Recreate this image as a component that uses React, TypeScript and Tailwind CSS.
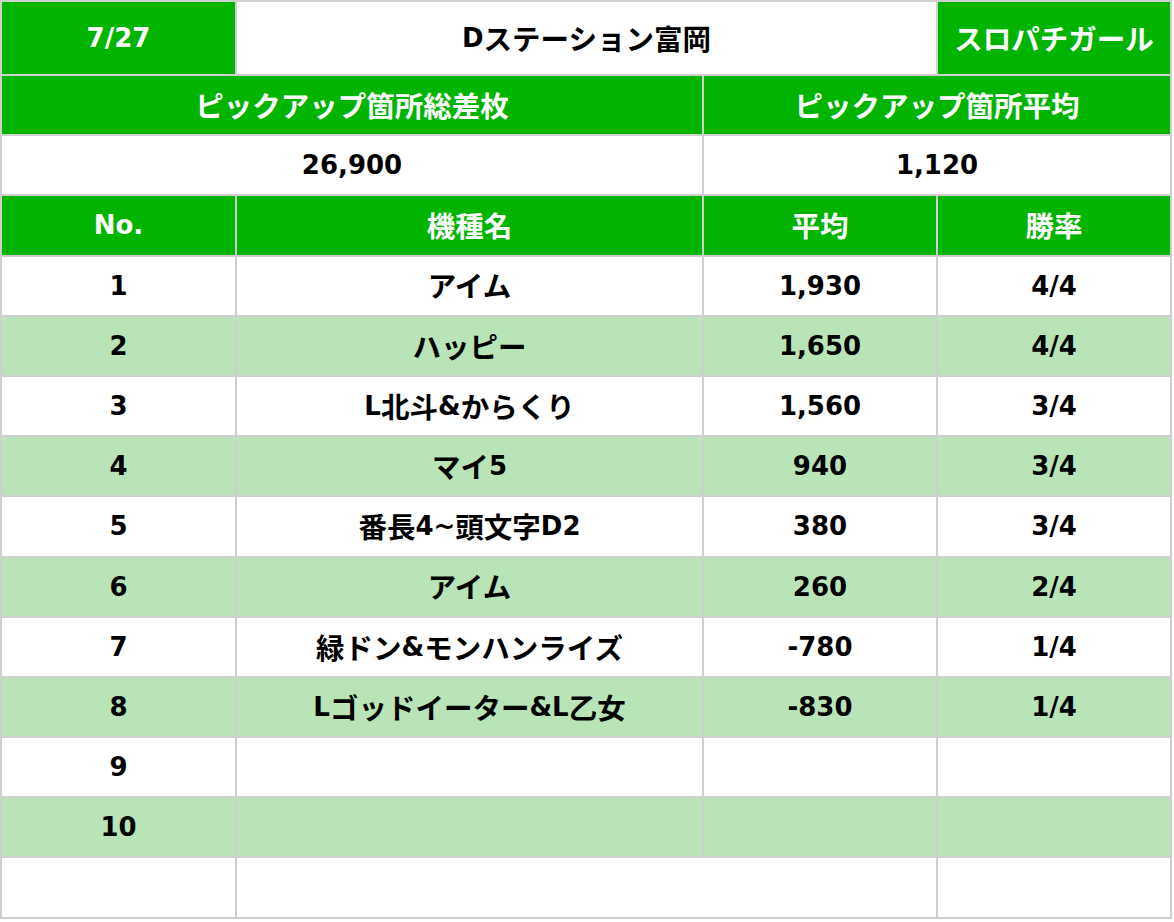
import React from "react";

const CJK = /[\u3000-\u9fff\uff00-\uffef]/;

// latin glyphs in DejaVu, japanese runs a bit bigger like the sheet's font
function Txt({ s }: { s: string }) {
  const parts: { t: string; j: boolean }[] = [];
  for (const ch of s) {
    const j = CJK.test(ch);
    const last = parts[parts.length - 1];
    if (last && last.j === j) last.t += ch;
    else parts.push({ t: ch, j });
  }
  return (
    <>
      {parts.map((p, i) =>
        p.j ? (
          <span key={i} className="text-[28.5px] font-['Noto_Sans_CJK_JP',sans-serif]">
            {p.t}
          </span>
        ) : (
          <span key={i} className="text-[26px]">
            {p.t}
          </span>
        )
      )}
    </>
  );
}

type CellProps = { s?: string; span?: string; tone: "g" | "w" | "l" };

function Cell({ s = "", span = "", tone }: CellProps) {
  const bg =
    tone === "g"
      ? "bg-[#00b400] text-white"
      : tone === "l"
      ? "bg-[#b8e4b8] text-black"
      : "bg-white text-black";
  return (
    <div className={`${bg} ${span} flex items-center justify-center leading-none font-bold`}>
      <Txt s={s} />
    </div>
  );
}

const rows = [
  ["1", "アイム", "1,930", "4/4"],
  ["2", "ハッピー", "1,650", "4/4"],
  ["3", "L北斗&からくり", "1,560", "3/4"],
  ["4", "マイ5", "940", "3/4"],
  ["5", "番長4~頭文字D2", "380", "3/4"],
  ["6", "アイム", "260", "2/4"],
  ["7", "緑ドン&モンハンライズ", "-780", "1/4"],
  ["8", "Lゴッドイーター&L乙女", "-830", "1/4"],
  ["9", "", "", ""],
  ["10", "", "", ""],
];

export default function App() {
  return (
    <div className="w-[1174px] h-[922px] bg-white">
      <div className="w-[1172px] grid grid-cols-[233px_465px_232px_232px] grid-rows-[72px_repeat(14,58.2px)] gap-[2px] p-[2px] bg-[#cfcfcf] font-['DejaVu_Sans','Noto_Sans_CJK_JP',sans-serif]">
        <Cell s="7/27" tone="g" />
        <Cell s="Dステーション富岡" span="col-span-2" tone="w" />
        <Cell s="スロパチガール" tone="g" />

        <Cell s="ピックアップ箇所総差枚" span="col-span-2" tone="g" />
        <Cell s="ピックアップ箇所平均" span="col-span-2" tone="g" />

        <Cell s="26,900" span="col-span-2" tone="w" />
        <Cell s="1,120" span="col-span-2" tone="w" />

        <Cell s="No." tone="g" />
        <Cell s="機種名" tone="g" />
        <Cell s="平均" tone="g" />
        <Cell s="勝率" tone="g" />

        {rows.map((r, i) => {
          const tone = i % 2 === 1 ? "l" : "w";
          return (
            <React.Fragment key={i}>
              {r.map((c, k) => (
                <Cell key={k} s={c} tone={tone} />
              ))}
            </React.Fragment>
          );
        })}

        <Cell tone="w" />
        <Cell span="col-span-2" tone="w" />
        <Cell tone="w" />
      </div>
    </div>
  );
}
